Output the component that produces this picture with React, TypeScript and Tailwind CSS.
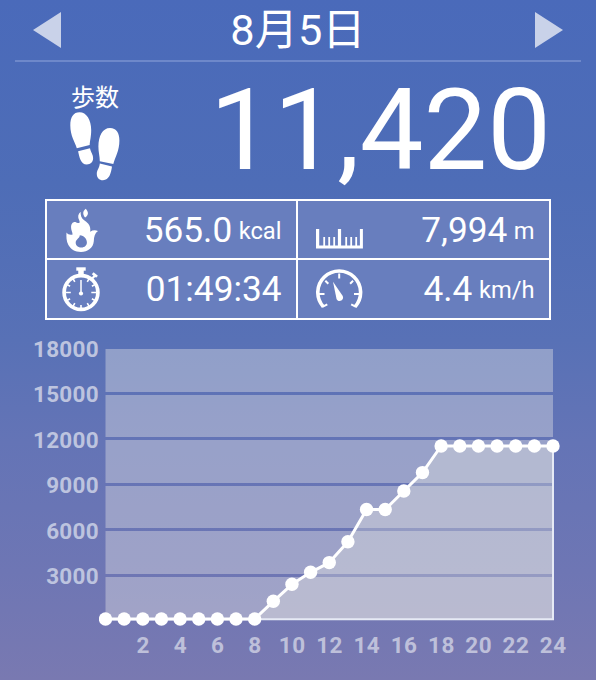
import React from 'react';

const X0 = 105.5;
const STEP = 447.5 / 24;
const BASE = 619;

const ys = [
  619, 619, 619, 619, 619, 619, 619, 619, 619, 601.3, 584.3, 572.3, 562.6, 541.8, 509.5, 509.5, 491, 472.6, 446,
  446, 446, 446, 446, 446, 446,
];
const points = ys.map((y, i) => [X0 + i * STEP, y]);
const line = points.map(([x, y]) => `${x},${y}`).join(' ');

const bands = [
  [349, 43],
  [395, 42],
  [440, 43],
  [486, 42],
  [531, 43],
  [577, 42],
];

const yLabels = ['18000', '15000', '12000', '9000', '6000', '3000'];
const xLabels = ['2', '4', '6', '8', '10', '12', '14', '16', '18', '20', '22', '24'];

function Footprints() {
  return (
    <svg className="block" width="50" height="70" viewBox="70 112 50 70" fill="#fff">
      <path d="M76.8 148.2C75 142 70.3 136 70.3 125.5C70.3 117 73.500 112.300 79.500 112.300C86.500 112.300 91.200 120 91.200 130C91.200 137 89.800 141 89.700 145Z" />
      <path d="M78.100 151.200L90 148.200C90.800 152.500 93.100 154 93.100 158.300C93.100 162.200 90.400 164.500 86.800 164.500C80.600 164.500 79.400 157 78.100 151.200Z" />
      <path d="M99.800 161.200C99.800 156 98.400 152 98.400 146.500C98.400 136 102.600 128 110 128C116.500 128 119.400 133 119.400 140.500C119.400 151 115.200 157 113.300 164Z" />
      <path d="M99.800 163.500L112 166.600C111 173.500 109.200 180.200 103 180.200C99 180.200 96.800 177.600 96.800 173.700C96.800 170 99.500 168 99.800 163.500Z" />
    </svg>
  );
}

function Flame() {
  return (
    <svg className="block" width="38" height="46" viewBox="62 207 38 46" fill="#fff">
      <path
        fillRule="evenodd"
        d="M80.600 211.800C77.800 214.300 77.600 217.300 79.200 220.200C80.200 222.400 79.500 223.300 77.800 223C76.500 222.700 75.500 221.800 74.200 222.100C71.700 222.700 70.800 225.500 71.100 228C71.300 230.300 72.400 232 72.600 234.500C69.600 235.200 67.800 234 66.500 232.400C66.300 236.300 66.200 241 68.400 245.100C70.900 249.700 75.300 252 80.900 252C87.800 252 93.300 247.600 93.800 241.200C93.900 236.500 94.900 233.200 98 231C95 229.800 92.500 230.300 90.200 231.700C90.500 229.300 90.400 226.200 88.300 223.700C85.600 220.800 82.400 219.600 81.300 216.700C80.700 215 80.600 213.500 80.600 211.800ZM79.800 235.300C79.800 238.300 75.700 239.400 75.700 242.700C75.700 245.600 78.200 247.500 81.400 247.500C84.800 247.500 86.900 245.300 86.900 242.500C86.900 239.100 84.300 235.800 79.800 235.300Z"
      />
      <path d="M85.800 208.700C82.400 210.900 82.600 214.600 85.100 217.500C88.300 215.200 89.100 212.700 85.800 208.700Z" />
    </svg>
  );
}

function Stopwatch() {
  return (
    <svg className="block" width="39" height="46" viewBox="62 266 39 46" fill="none" stroke="#fff">
      <circle cx="81" cy="292.500" r="16.900" strokeWidth="3.700" />
      <path d="M76.300 269H85.700" strokeWidth="3.400" />
      <path d="M81 270V276" strokeWidth="5.500" />
      <path d="M92 278.700L95 275.500" strokeWidth="2.200" />
      <path d="M92.700 273.200L97 276.800" strokeWidth="2.800" />
      <path
        d="M81 305V309M66 292.500H70.800M91.300 292.500H96M73 278.700L74.800 281.800M89.100 278.700L87.300 281.800M66.800 284.400L70.100 286.300M95.200 284.400L91.900 286.300M66.800 300.600L70.100 298.700M95.200 300.600L91.900 298.700M73 306.300L74.800 303.200M89.100 306.300L87.300 303.200"
        strokeWidth="1.600"
      />
      <path d="M81 280V293" strokeWidth="1.500" />
      <circle cx="81" cy="293.500" r="2.100" fill="#fff" stroke="none" />
    </svg>
  );
}

function Ruler() {
  return (
    <svg className="block" width="48" height="40" viewBox="316 210 48 40" fill="#fff">
      <path d="M316 229h3.200v16.500h4.100v-8.500h1.800v8.500h3.200v-8.500h1.800v8.500h3.200v-8.500h1.800v8.500h2.800v-16.500h3.200v16.500h4.200v-8.500h1.800v8.500h3.200v-8.500h1.800v8.500h3.200v-8.500h1.800v8.500h2.800v-16.500h3v19.500h-46.900z" />
    </svg>
  );
}

function Gauge() {
  return (
    <svg className="block" width="48" height="40" viewBox="316 268.500 48 40" fill="none" stroke="#fff">
      <path d="M323.300 306.200A21.400 21.400 0 1 1 355.100 306.200" strokeWidth="3.600" />
      <path
        d="M339.200 273V278M325.300 280.300L328.300 283.300M353.100 280.300L350.100 283.300M319 293.500H324.500M354 293.500H359.500M322.400 306.300L327.300 303.800M356 306.300L351.200 303.800"
        strokeWidth="2"
      />
      <path d="M333 281.300L342.400 295.100C345 299.100 339.200 303 336.600 298.700Z" fill="#fff" stroke="none" />
    </svg>
  );
}

function Stat({ icon, value, unit }: { icon: React.ReactNode; value: string; unit?: string }) {
  return (
    <div className="flex items-center justify-between bg-[#687ebe] pl-[15px] pr-[14.5px] even:pl-[18px]">
      <div className="flex w-12 items-center">{icon}</div>
      <div className="flex items-center gap-[6.5px] whitespace-nowrap leading-10">
        <span className="text-[35.2px]">{value}</span>
        {unit && <span className="pt-[2px] text-[23.7px]">{unit}</span>}
      </div>
    </div>
  );
}

export default function App() {
  return (
    <div className="h-[680px] w-[596px] overflow-hidden bg-[linear-gradient(180deg,#4a6aba_0%,#4e6db7_27%,#5871b6_50%,#6474b6_65%,#6e76b4_84%,#7979b1_100%)] font-['Roboto','Noto_Sans_CJK_JP',sans-serif] text-white">
      <header className="mx-[15px] flex h-[62px] items-center justify-between border-b-2 border-[#6e88ca] px-[18px]">
        <svg width="28" height="36" viewBox="0 0 28 36" className="block">
          <path d="M0 18L28 0V36Z" fill="#c9d2e9" />
        </svg>
        <h1 className="pt-[2px] text-[43.3px] leading-[58px]">8月5日</h1>
        <svg width="28" height="36" viewBox="0 0 28 36" className="block">
          <path d="M28 18L0 0V36Z" fill="#c9d2e9" />
        </svg>
      </header>

      <section className="flex h-[137px] justify-between pl-[70px] pr-[45px] pt-[20px]">
        <div className="flex w-[50px] flex-col items-center">
          <span className="h-[30px] whitespace-nowrap text-[24px] leading-[32px]">歩数</span>
          <Footprints />
        </div>
        <div className="text-[113.5px] leading-[97px]">11,420</div>
      </section>

      <section className="mx-[45px] grid h-[121px] grid-cols-[249px_251px] grid-rows-[57px_58px] gap-[2px] border-2 border-white bg-white">
        <Stat icon={<Flame />} value="565.0" unit="kcal" />
        <Stat icon={<Ruler />} value="7,994" unit="m" />
        <Stat icon={<Stopwatch />} value="01:49:34" />
        <Stat icon={<Gauge />} value="4.4" unit="km/h" />
      </section>

      <section className="mt-[18px] text-[22.5px] font-bold text-[#bdc4df]">
        <div className="flex h-[291px]">
          <div className="flex w-[99px] flex-col text-right">
            {yLabels.map((label) => (
              <div key={label} className="h-[45.4px] leading-[23px] tracking-[0.3px]">
                {label}
              </div>
            ))}
          </div>
          <svg className="block" width="464" height="291" viewBox="99 338 464 291">
            {bands.map(([y, h]) => (
              <rect key={y} x="105.500" y={y} width="447.500" height={h} fill="#f5f0eb" fillOpacity="0.36" />
            ))}
            <polygon points={`${line} 553,${BASE} ${X0},${BASE}`} fill="#f5f3e6" fillOpacity="0.29" />
            <path d={`M${X0} 619.300H553V446`} fill="none" stroke="#e6eaf5" strokeWidth="2" />
            <polyline points={line} fill="none" stroke="#fff" strokeWidth="3" strokeLinejoin="round" />
            {points.map(([x, y]) => (
              <circle key={x} cx={x} cy={y} r="6.700" fill="#fff" />
            ))}
          </svg>
        </div>
        <div className="ml-[124.5px] flex text-[22.5px] leading-[32px]">
          {xLabels.map((label) => (
            <div key={label} className="w-[37.29px] shrink-0 text-center tracking-[0.5px] text-[#bec0da]">
              {label}
            </div>
          ))}
        </div>
      </section>
    </div>
  );
}
